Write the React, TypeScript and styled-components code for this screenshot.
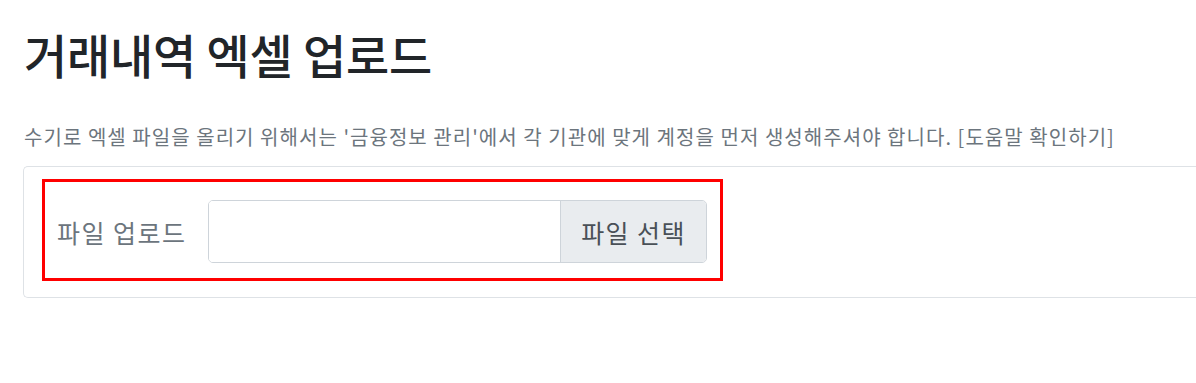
import React from "react";
import styled, { createGlobalStyle } from "styled-components";

const Global = createGlobalStyle`
  html, body { margin: 0; padding: 0; background: #fff; }
  body { font-family: "Noto Sans CJK KR", "Noto Sans", sans-serif; color: #212529; }
`;

const Page = styled.div`
  padding: 26px 0 0 24px;
  overflow: hidden;
`;

const Title = styled.h1`
  margin: 0;
  font-size: 47px;
  font-weight: 500;
  line-height: 56px;
  letter-spacing: -0.2px;
  color: #212529;
`;

const Description = styled.p`
  margin: 40px 0 14px;
  font-size: 20px;
  line-height: 30px;
  letter-spacing: 1.05px;
  color: #6c757d;
  white-space: nowrap;
`;

const Card = styled.div`
  border: 1px solid #dee2e6;
  border-right: none;
  border-radius: 5px 0 0 5px;
  padding: 12px 0 16px 18px;
  margin-left: -1px;
  width: 1200px;
`;

const Highlight = styled.div`
  display: flex;
  align-items: center;
  gap: 21px;
  width: 681px;
  box-sizing: border-box;
  border: 3px solid #ff0000;
  padding: 18px 13px 15px 12px;
`;

const Label = styled.label`
  font-size: 25px;
  letter-spacing: 1.5px;
  color: #6c757d;
  white-space: nowrap;
`;

const FileGroup = styled.div`
  display: flex;
  flex: 1;
  height: 63px;
  border: 1px solid #ced4da;
  border-radius: 5px;
  overflow: hidden;
  box-sizing: border-box;
`;

const FileInput = styled.div`
  flex: 1;
  background: #fff;
`;

const FileButton = styled.span`
  display: flex;
  align-items: center;
  justify-content: center;
  width: 145px;
  background: #e9ecef;
  border-left: 1px solid #ced4da;
  font-size: 25px;
  letter-spacing: 1.4px;
  color: #495057;
`;

export default function App() {
  return (
    <>
      <Global />
      <Page>
        <Title>거래내역 엑셀 업로드</Title>
        <Description>
          수기로 엑셀 파일을 올리기 위해서는 '금융정보 관리'에서 각 기관에 맞게 계정을 먼저 생성해주셔야 합니다. [도움말 확인하기]
        </Description>
        <Card>
          <Highlight>
            <Label>파일 업로드</Label>
            <FileGroup>
              <FileInput />
              <FileButton>파일 선택</FileButton>
            </FileGroup>
          </Highlight>
        </Card>
      </Page>
    </>
  );
}
